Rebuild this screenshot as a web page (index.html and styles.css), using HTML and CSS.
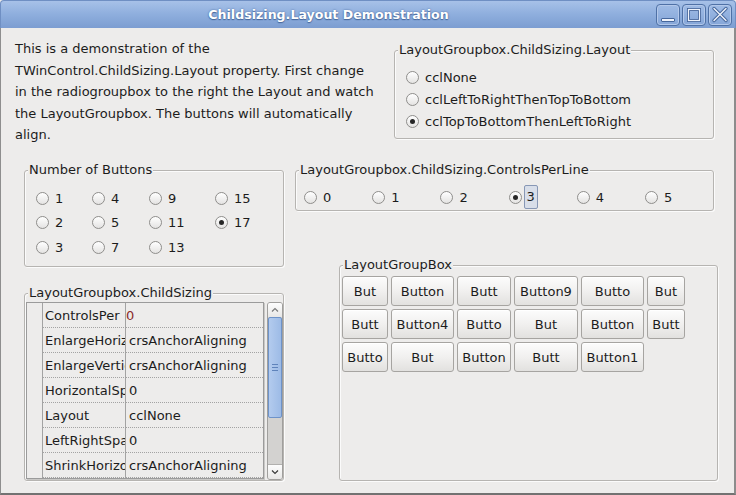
FILE: index.html
```html
<!DOCTYPE html>
<html>
<head>
<meta charset="utf-8">
<link rel="stylesheet" href="styles.css">
</head>
<body>
<div class="window">
  <div class="titlebar">
    <div class="title">Childsizing.Layout Demonstration</div>
    <div class="wbtns">
      <span class="wbtn">
        <svg width="24" height="22" viewBox="0 0 24 22">
          <rect x="5.5" y="14.5" width="13" height="3" rx="0.5" fill="#eef2fa" stroke="#46679c" stroke-width="1"/>
        </svg>
      </span>
      <span class="wbtn">
        <svg width="24" height="22" viewBox="0 0 24 22">
          <rect x="6.5" y="5.5" width="11" height="11" fill="none" stroke="#46679c" stroke-width="3"/>
          <rect x="6.5" y="5.5" width="11" height="11" fill="none" stroke="#eef2fa" stroke-width="1.2"/>
        </svg>
      </span>
      <span class="wbtn">
        <svg width="24" height="22" viewBox="0 0 24 22">
          <path d="M6 4.5 L18 16.5 M18 4.5 L6 16.5" stroke="#46679c" stroke-width="3.4" stroke-linecap="round"/>
          <path d="M6 4.5 L18 16.5 M18 4.5 L6 16.5" stroke="#eef2fa" stroke-width="1.4" stroke-linecap="round"/>
        </svg>
      </span>
    </div>
  </div>
  <div class="client">
    <div class="row row1">
      <p class="intro">This is a demonstration of the<br>TWinControl.ChildSizing.Layout property. First change<br>in the radiogroupbox to the right the Layout and watch<br>the LayoutGroupbox. The buttons will automatically<br>align.</p>
      <div class="group group-layout">
        <span class="legend">LayoutGroupbox.ChildSizing.Layout</span>
        <div class="radio-list">
          <div class="radio-item"><span class="radio"></span>cclNone</div>
          <div class="radio-item"><span class="radio"></span>cclLeftToRightThenTopToBottom</div>
          <div class="radio-item"><span class="radio checked"></span>cclTopToBottomThenLeftToRight</div>
        </div>
      </div>
    </div>
    <div class="row row2">
      <div class="group group-count">
        <span class="legend">Number of Buttons</span>
        <div class="count-grid">
          <div class="radio-item"><span class="radio"></span>1</div>
          <div class="radio-item"><span class="radio"></span>2</div>
          <div class="radio-item"><span class="radio"></span>3</div>
          <div class="radio-item"><span class="radio"></span>4</div>
          <div class="radio-item"><span class="radio"></span>5</div>
          <div class="radio-item"><span class="radio"></span>7</div>
          <div class="radio-item"><span class="radio"></span>9</div>
          <div class="radio-item"><span class="radio"></span>11</div>
          <div class="radio-item"><span class="radio"></span>13</div>
          <div class="radio-item"><span class="radio"></span>15</div>
          <div class="radio-item"><span class="radio checked"></span>17</div>
        </div>
      </div>
      <div class="group group-perline">
        <span class="legend">LayoutGroupbox.ChildSizing.ControlsPerLine</span>
        <div class="perline-grid">
          <div class="radio-item"><span class="radio"></span>0</div>
          <div class="radio-item"><span class="radio"></span>1</div>
          <div class="radio-item"><span class="radio"></span>2</div>
          <div class="radio-item"><span class="radio checked"></span><span class="focus">3</span></div>
          <div class="radio-item"><span class="radio"></span>4</div>
          <div class="radio-item"><span class="radio"></span>5</div>
        </div>
      </div>
    </div>
    <div class="row row3">
      <div class="group group-sizing">
        <span class="legend">LayoutGroupbox.ChildSizing</span>
        <div class="sizing-inner">
          <div class="prop-grid">
            <div class="prow"><span class="fixed"></span><span class="pname">ControlsPer</span><span class="pval"><span class="editing">0</span></span></div>
            <div class="prow"><span class="fixed"></span><span class="pname">EnlargeHorizontal</span><span class="pval">crsAnchorAligning</span></div>
            <div class="prow"><span class="fixed"></span><span class="pname">EnlargeVertical</span><span class="pval">crsAnchorAligning</span></div>
            <div class="prow"><span class="fixed"></span><span class="pname">HorizontalSpacing</span><span class="pval">0</span></div>
            <div class="prow"><span class="fixed"></span><span class="pname">Layout</span><span class="pval">cclNone</span></div>
            <div class="prow"><span class="fixed"></span><span class="pname">LeftRightSpacing</span><span class="pval">0</span></div>
            <div class="prow"><span class="fixed"></span><span class="pname">ShrinkHorizontal</span><span class="pval">crsAnchorAligning</span></div>
          </div>
          <div class="vscroll">
            <span class="sbtn">
              <svg width="14" height="14" viewBox="0 0 14 14"><path d="M4 8.5 L7 5.5 L10 8.5" fill="none" stroke="#7a7a7a" stroke-width="1.2"/></svg>
            </span>
            <span class="thumb"><span class="grip"></span></span>
            <span class="track"></span>
            <span class="sbtn">
              <svg width="14" height="14" viewBox="0 0 14 14"><path d="M4 5.5 L7 8.5 L10 5.5" fill="none" stroke="#3a3a3a" stroke-width="1.2"/></svg>
            </span>
          </div>
        </div>
      </div>
      <div class="group group-buttons">
        <span class="legend">LayoutGroupBox</span>
        <div class="btn-grid">
          <button class="btn">But</button>
          <button class="btn">Button</button>
          <button class="btn">Butt</button>
          <button class="btn">Button9</button>
          <button class="btn">Butto</button>
          <button class="btn">But</button>
          <button class="btn">Butt</button>
          <button class="btn">Button4</button>
          <button class="btn">Butto</button>
          <button class="btn">But</button>
          <button class="btn">Button</button>
          <button class="btn">Butt</button>
          <button class="btn">Butto</button>
          <button class="btn">But</button>
          <button class="btn">Button</button>
          <button class="btn">Butt</button>
          <button class="btn">Button1</button>
        </div>
      </div>
    </div>
  </div>
</div>
</body>
</html>
```

FILE: styles.css
```css
* { box-sizing: border-box; }
html, body { margin: 0; padding: 0; }
body {
  width: 736px;
  height: 495px;
  overflow: hidden;
  font-family: "DejaVu Sans", sans-serif;
  font-size: 13px;
  color: #1c1c1c;
  background: #edeceb;
}
.window {
  width: 736px;
  height: 495px;
  display: flex;
  flex-direction: column;
}
.titlebar {
  height: 28px;
  flex: none;
  display: flex;
  align-items: center;
  background: linear-gradient(#a7c1e8, #8eaedd 50%, #7c9dd1);
  border-top: 1px solid #6f8fc3;
  border-left: 1px solid #6f8fc3;
  border-right: 1px solid #6f8fc3;
  border-radius: 4px 4px 0 0;
}
.title {
  flex: 1;
  text-align: center;
  color: #fff;
  font-weight: bold;
  font-size: 12.6px;
  text-shadow: 0 0 2px #46679c, 0 1px 1px #46679c;
}
.wbtns {
  display: flex;
  gap: 2px;
  padding-right: 3px;
  padding-top: 1px;
}
.wbtn {
  width: 24px;
  height: 22px;
  display: block;
  border: 1px solid #4f71a6;
  border-radius: 4px;
  box-shadow: inset 0 0 0 1px #b3c8ea;
  background: linear-gradient(#9fbbe5, #85a6d8);
}
.wbtn svg { display: block; margin: -1px 0 0 -1px; }
.client {
  flex: 1;
  display: flex;
  flex-direction: column;
  border-left: 1px solid #8e8e8e;
  border-right: 2px solid #8c8c8c;
  border-bottom: 2px solid #727272;
}
.row { display: flex; align-items: flex-start; flex: none; }
.row1 { height: 142px; }
.row2 { height: 95px; }
.row3 { flex: 1; }
.intro {
  margin: 10px 0 0 14px;
  width: 375px;
  line-height: 21.5px;
  white-space: nowrap;
}
.group {
  position: relative;
  border: 1px solid #b6b4b1;
  border-radius: 3px;
  box-shadow: 1px 1px 0 #fbfbfb, inset 1px 1px 0 #fbfbfb;
  flex: none;
}
.legend {
  position: absolute;
  top: -9px;
  left: 3px;
  padding: 0 1px;
  line-height: 16px;
  background: #edeceb;
  white-space: nowrap;
}
.group-layout { margin: 22px 0 0 4px; width: 320px; height: 89px; padding: 15px 0 0 11px; }
.radio-item {
  display: flex;
  align-items: center;
  gap: 6px;
  height: 22px;
  white-space: nowrap;
}
.radio {
  width: 13px;
  height: 13px;
  flex: none;
  border: 1px solid #8f8e8c;
  border-radius: 50%;
  background: linear-gradient(#ffffff, #e4e3e2);
  position: relative;
}
.radio.checked::after {
  content: "";
  position: absolute;
  left: 3px;
  top: 3px;
  width: 5px;
  height: 5px;
  border-radius: 50%;
  background: #262626;
}
.group-count { margin-left: 23px; width: 260px; height: 97px; padding: 15px 0 0 11px; }
.count-grid {
  display: grid;
  grid-auto-flow: column;
  grid-template-rows: repeat(3, 24.5px);
  grid-template-columns: 56px 57px 66px auto;
}
.count-grid .radio-item { height: 24.5px; }
.group-perline { margin-left: 11px; width: 419px; height: 41px; padding: 15px 0 0 8px; }
.perline-grid {
  display: grid;
  grid-template-columns: repeat(6, 68.2px);
}
.focus {
  margin-left: -4px;
  height: 24px;
  line-height: 22px;
  padding: 0 2px;
  border: 1px solid #8797b5;
  border-radius: 2px;
  background: #d8dee9;
}
.group-sizing { margin: 28px 0 0 23px; width: 260px; height: 188px; padding: 8px 0 0 1px; }
.sizing-inner { display: flex; gap: 3px; }
.prop-grid {
  width: 238px;
  height: 177px;
  border: 1px solid #9b9b9b;
  box-shadow: 1px 1px 0 #c9c8c6;
  overflow: hidden;
}
.prow {
  display: flex;
  height: 25px;
}
.fixed {
  width: 16px;
  flex: none;
  border-right: 1px solid #a3a3a3;
}
.pname, .pval {
  white-space: nowrap;
  overflow: hidden;
  height: 25px;
  padding-top: 2px;
  line-height: 22px;
  border-bottom: 1px dotted #a3a3a3;
}
.pname {
  width: 83px;
  flex: none;
  padding-left: 2px;
  border-right: 1px solid #a3a3a3;
}
.pval { flex: 1; padding-left: 3px; }
.editing { color: #8a2b2b; margin-left: -3px; }
.vscroll {
  width: 16px;
  height: 178px;
  display: flex;
  flex-direction: column;
  border: 1px solid #a09f9d;
  border-radius: 3px;
  background: #d3d2d0;
  overflow: hidden;
}
.sbtn {
  height: 14px;
  flex: none;
  display: block;
  background: linear-gradient(#fdfdfd, #e8e7e6);
}
.sbtn svg { display: block; }
.thumb {
  height: 101px;
  flex: none;
  display: flex;
  align-items: center;
  justify-content: center;
  border: 1px solid #6e93c9;
  border-radius: 2px;
  background: linear-gradient(90deg, #b3cbee, #9dbbe6);
}
.grip {
  width: 6px;
  height: 7px;
  border-top: 1px solid #5f83bb;
  border-bottom: 1px solid #5f83bb;
  position: relative;
}
.grip::after {
  content: "";
  position: absolute;
  left: 0;
  right: 0;
  top: 2px;
  border-top: 1px solid #5f83bb;
}
.track { flex: 1; border-bottom: 1px solid #b1b0ae; }
.group-buttons { margin-left: 55px; width: 379px; height: 216px; padding: 10px 0 0 2px; }
.btn-grid {
  display: grid;
  grid-template-columns: 46px 63px 54px 64px 63px 38px;
  grid-auto-rows: 30px;
  gap: 3px;
}
.btn {
  font-family: "DejaVu Sans", sans-serif;
  font-size: 13px;
  color: #1c1c1c;
  margin: 0;
  padding: 0;
  border: 1px solid #a6a4a1;
  border-radius: 3px;
  background: linear-gradient(#fcfcfc, #f1f0ef 50%, #e2e1df);
  box-shadow: inset 0 1px 0 #ffffff;
  white-space: nowrap;
  overflow: hidden;
}
```
